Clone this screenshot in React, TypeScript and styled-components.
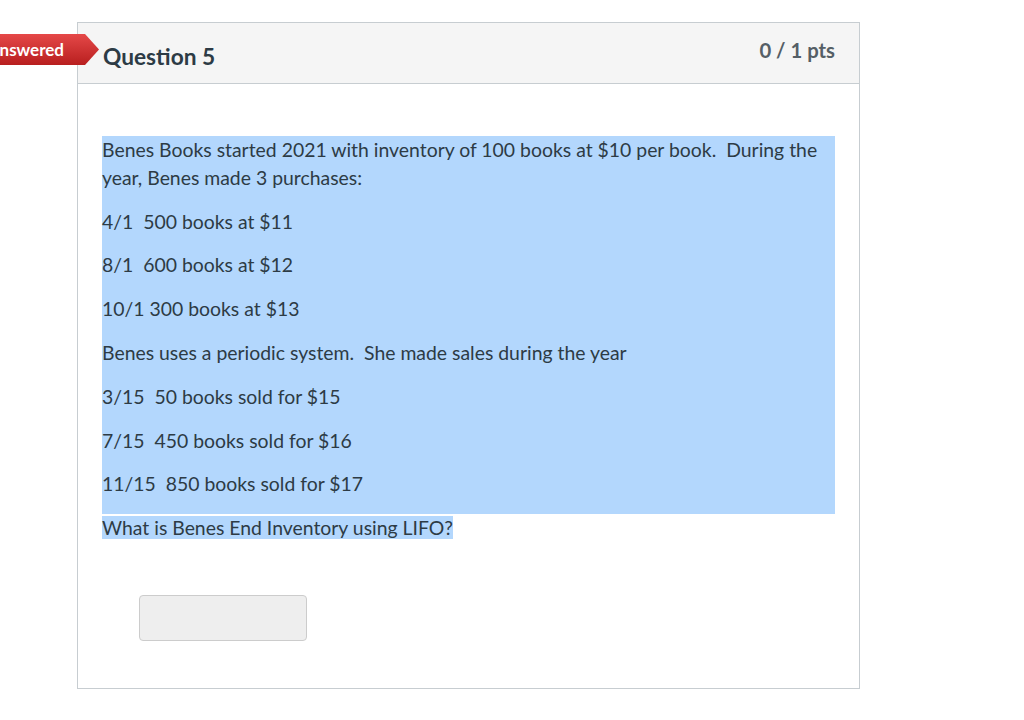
import React from 'react';
import styled, { createGlobalStyle } from 'styled-components';

const GlobalStyle = createGlobalStyle`
    html, body {
        margin: 0;
        padding: 0;
        background: #ffffff;
        font-family: Lato, 'Liberation Sans', sans-serif;
        color: #2d3b45;
    }
`;

const Page = styled.div`
    position: relative;
    width: 1024px;
    height: 720px;
    padding: 22px 0 0 77px;
    box-sizing: border-box;
`;

const Badge = styled.div`
    position: absolute;
    left: -53px;
    top: 34px;
    height: 31px;
    padding: 0 35px 0 22px;
    display: flex;
    align-items: center;
    color: #ffffff;
    font-weight: 700;
    font-size: 17px;
    background: linear-gradient(#e54848, #b81f1f);
    clip-path: polygon(0 0, calc(100% - 14px) 0, 100% 50%, calc(100% - 14px) 100%, 0 100%);
`;

const Card = styled.div`
    width: 783px;
    height: 667px;
    box-sizing: border-box;
    border: 1px solid #c7cdd1;
    display: flex;
    flex-direction: column;
`;

const Header = styled.div`
    height: 61px;
    box-sizing: border-box;
    background: #f5f5f5;
    border-bottom: 1px solid #c7cdd1;
    display: flex;
    align-items: center;
    justify-content: space-between;
    padding: 0 24px 0 25px;
`;

const Title = styled.h2`
    margin: 6px 0 0;
    font-size: 22.7px;
    font-weight: 700;
`;

const Points = styled.div`
    font-size: 20.3px;
    font-weight: 700;
    color: #555f66;
    margin-top: -6px;
`;

const Body = styled.div`
    padding: 52px 24px 0 24px;
`;

const Selected = styled.div`
    background: #b3d7fd;
    display: flow-root;
`;

const Para = styled.p`
    margin: 0 0 16px;
    font-size: 19.4px;
    line-height: 27.8px;
    white-space: pre-wrap;
`;

const Mark = styled.span`
    background: #b3d7fd;
`;

const Answer = styled.div`
    width: 168px;
    height: 46px;
    box-sizing: border-box;
    margin: 53px 0 0 37px;
    background: #eeeeee;
    border: 1px solid #cccccc;
    border-radius: 4px;
`;

const lines = [
    'Benes Books started 2021 with inventory of 100 books at $10 per book.  During the year, Benes made 3 purchases:',
    '4/1  500 books at $11',
    '8/1  600 books at $12',
    '10/1 300 books at $13',
    'Benes uses a periodic system.  She made sales during the year',
    '3/15  50 books sold for $15',
    '7/15  450 books sold for $16',
    '11/15  850 books sold for $17',
];

export default function App() {
    return (
        <>
            <GlobalStyle />
            <Page>
                <Badge>Unanswered</Badge>
                <Card>
                    <Header>
                        <Title>Question 5</Title>
                        <Points>0 / 1 pts</Points>
                    </Header>
                    <Body>
                        <Selected>
                            {lines.map((l) => (
                                <Para key={l}>{l}</Para>
                            ))}
                        </Selected>
                        <Para>
                            <Mark>What is Benes End Inventory using LIFO?</Mark>
                        </Para>
                        <Answer />
                    </Body>
                </Card>
            </Page>
        </>
    );
}
